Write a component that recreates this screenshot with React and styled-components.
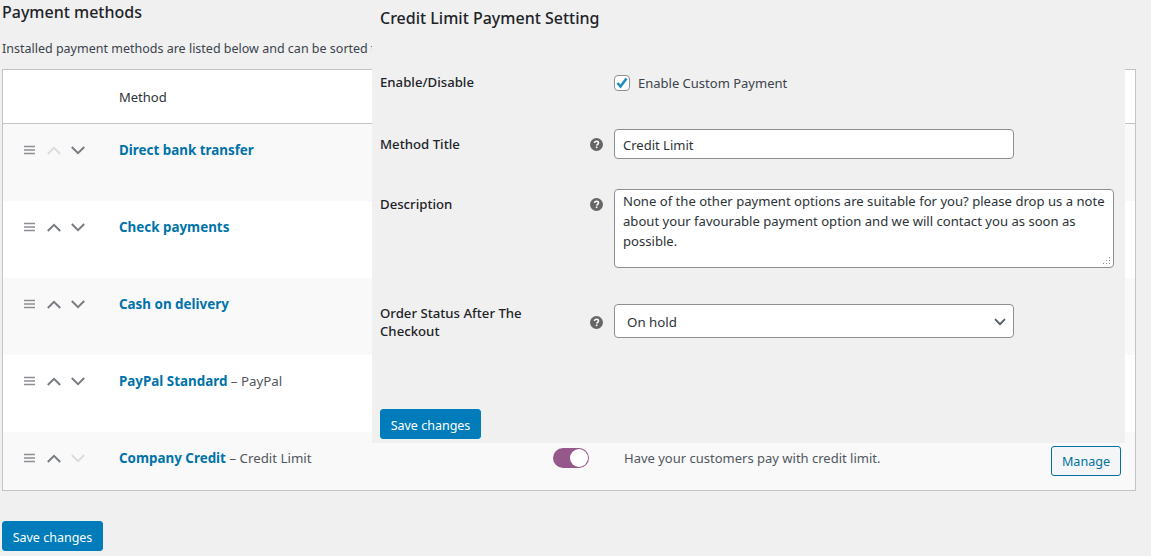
import React from "react";
import styled, { createGlobalStyle } from "styled-components";

const GlobalStyle = createGlobalStyle`
  html, body {
    margin: 0;
    background: #f0f0f1;
    overflow: hidden;
  }
  body {
    font-family: "Noto Sans", sans-serif;
    font-size: 13px;
    color: #3c434a;
  }
  * {
    box-sizing: border-box;
  }
`;

const Page = styled.div`
  position: relative;
  width: 1151px;
  height: 556px;
  padding: 0 15px 0 2px;
  overflow: hidden;
`;

const PageTitle = styled.h2`
  margin: 0;
  padding-top: 2px;
  height: 38px;
  font-size: 16px;
  line-height: 20px;
  font-weight: 500;
  color: #1d2327;
`;

const Intro = styled.p`
  margin: 0;
  height: 31px;
  padding-top: 1px;
  font-size: 12.5px;
  line-height: 20px;
  white-space: nowrap;
`;

const Table = styled.div`
  width: 1134px;
  background: #fff;
  border: 1px solid #c3c4c7;
`;

const HeaderRow = styled.div`
  height: 54px;
  padding-left: 116px;
  display: flex;
  align-items: center;
  font-size: 13px;
  color: #2c3338;
  border-bottom: 1px solid #c3c4c7;
`;

const Row = styled.div`
  height: ${(p) => p.$height}px;
  padding: 15px 14px 0 21px;
  display: flex;
  align-items: flex-start;
  background: ${(p) => (p.$alt ? "#f9f9f9" : "#fff")};
`;

const Controls = styled.div`
  width: 95px;
  height: 22px;
  flex: none;
  display: flex;
  align-items: center;
  gap: 10px;
`;

const MethodCell = styled.div`
  width: 434px;
  flex: none;
  font-size: 13.3px;
  line-height: 22px;
  color: #50575e;
`;

const MethodName = styled.a`
  color: #0073aa;
  font-size: 13.4px;
  font-weight: 700;
  text-decoration: none;
`;

const Toggle = styled.span`
  position: relative;
  width: 36px;
  height: 20px;
  margin-top: 1px;
  flex: none;
  border-radius: 10px;
  background: #96588a;
  &::after {
    content: "";
    position: absolute;
    top: 1px;
    right: 1px;
    width: 18px;
    height: 18px;
    border-radius: 50%;
    background: #fff;
  }
`;

const RowDescription = styled.div`
  margin-left: 35px;
  flex: 1;
  line-height: 22px;
  color: #50575e;
`;

const ManageButton = styled.a`
  width: 70px;
  height: 30px;
  margin-top: -1px;
  flex: none;
  display: flex;
  align-items: center;
  justify-content: center;
  font-size: 12.6px;
  color: #0071a1;
  background: #f3f5f6;
  border: 1px solid #0071a1;
  border-radius: 3px;
`;

const SaveButton = styled.button`
  width: 101px;
  height: 30px;
  padding: 2px 0 0;
  display: block;
  font-family: inherit;
  font-size: 12.5px;
  color: #fff;
  background: #007cba;
  border: 1px solid #007cba;
  border-radius: 3px;
`;

const FooterSave = styled.div`
  margin-top: 30px;
`;

const SettingsPanel = styled.section`
  position: absolute;
  top: 0;
  left: 372px;
  width: 753px;
  height: 443px;
  padding-left: 8px;
  background: #f0f0f1;
`;

const PanelTitle = styled.h3`
  margin: 0;
  height: 73px;
  padding-top: 8px;
  font-size: 16px;
  line-height: 20px;
  font-weight: 500;
  color: #1d2327;
`;

const FormRow = styled.div`
  display: grid;
  grid-template-columns: 210px 24px 1fr;
  align-items: start;
  margin-bottom: ${(p) => p.$after}px;
`;

const FieldLabel = styled.label`
  max-width: 170px;
  padding-top: ${(p) => p.$top || 0}px;
  font-size: 13.2px;
  line-height: 18px;
  font-weight: 500;
  color: #1d2327;
`;

const HelpSlot = styled.div`
  padding-top: ${(p) => p.$top || 0}px;
  display: flex;
`;

const CheckLine = styled.label`
  height: 20px;
  display: flex;
  align-items: center;
  gap: 8px;
  color: #3c434a;
`;

const CheckBox = styled.span`
  position: relative;
  width: 16px;
  height: 16px;
  flex: none;
  background: #fff;
  border: 1px solid #8c8f94;
  border-radius: 4px;
`;

const CheckMark = styled.svg`
  position: absolute;
  top: 0;
  left: 0;
`;

const TextInput = styled.input`
  display: block;
  width: 400px;
  height: 30px;
  padding: 2px 8px 0;
  font-family: inherit;
  font-size: 13px;
  color: #2c3338;
  background: #fff;
  border: 1px solid #8c8f94;
  border-radius: 4px;
`;

const TextAreaWrap = styled.div`
  position: relative;
  width: 500px;
`;

const TextArea = styled.textarea`
  display: block;
  width: 100%;
  height: 79px;
  padding: 1px 8px;
  resize: none;
  font-family: inherit;
  font-size: 13.1px;
  line-height: 20px;
  color: #2c3338;
  background: #fff;
  border: 1px solid #8c8f94;
  border-radius: 4px;
`;

const ResizeGrip = styled.svg`
  position: absolute;
  right: 3px;
  bottom: 3px;
  pointer-events: none;
`;

const SelectWrap = styled.div`
  position: relative;
  width: 400px;
`;

const Select = styled.select`
  display: block;
  width: 100%;
  height: 34px;
  padding: 2px 24px 0 12px;
  appearance: none;
  font-family: inherit;
  font-size: 13.3px;
  color: #2c3338;
  background: #fff;
  border: 1px solid #8c8f94;
  border-radius: 4px;
`;

const SelectArrow = styled.svg`
  position: absolute;
  top: 14px;
  right: 8px;
  pointer-events: none;
`;

const HandleIcon = styled.svg`
  flex: none;
  margin-right: 2px;
`;

const ChevronIcon = styled.svg`
  flex: none;
`;

const DragHandle = () => (
  <HandleIcon width="11" height="10" viewBox="0 0 11 10">
    <path d="M0 1.500h11M0 5h11M0 8.500h11" stroke="#8c8f94" strokeWidth="1.600" fill="none" />
  </HandleIcon>
);

const Chevron = ({ up, dim }) => (
  <ChevronIcon width="14" height="9" viewBox="0 0 14 9">
    <path
      d={up ? "M0.800 8L7 1.800L13.200 8" : "M0.800 1L7 7.200L13.200 1"}
      stroke={dim ? "#dcdcde" : "#787c82"}
      strokeWidth="2"
      fill="none"
    />
  </ChevronIcon>
);

const HelpIcon = () => (
  <svg width="13" height="13" viewBox="0 0 13 13">
    <circle cx="6.500" cy="6.500" r="6.500" fill="#666" />
    <path
      d="M4.500 5.100C4.500 4 5.400 3.300 6.500 3.300C7.700 3.300 8.500 4 8.500 5C8.500 6.200 7 6.300 6.600 7.500"
      stroke="#fff"
      strokeWidth="1.500"
      fill="none"
    />
    <rect x="5.800" y="8.500" width="1.600" height="1.600" fill="#fff" />
  </svg>
);

const gripDots = [
  [7, 1],
  [4, 4],
  [7, 4],
  [1, 7],
  [4, 7],
  [7, 7],
];

const methods = [
  { name: "Direct bank transfer", firstUp: true },
  { name: "Check payments" },
  { name: "Cash on delivery" },
  { name: "PayPal Standard", sub: "PayPal" },
  {
    name: "Company Credit",
    sub: "Credit Limit",
    lastDown: true,
    description: "Have your customers pay with credit limit.",
  },
];

export default function App() {
  return (
    <Page>
      <GlobalStyle />
      <PageTitle>Payment methods</PageTitle>
      <Intro>
        Installed payment methods are listed below and can be sorted to control their display order
        on the frontend.
      </Intro>

      <Table>
        <HeaderRow>Method</HeaderRow>
        {methods.map((method, index) => (
          <Row key={method.name} $alt={index % 2 === 0} $height={method.description ? 58 : 77}>
            <Controls>
              <DragHandle />
              <Chevron up dim={method.firstUp} />
              <Chevron dim={method.lastDown} />
            </Controls>
            <MethodCell>
              <MethodName>{method.name}</MethodName>
              {method.sub ? ` – ${method.sub}` : null}
            </MethodCell>
            {method.description ? (
              <>
                <Toggle />
                <RowDescription>{method.description}</RowDescription>
                <ManageButton>Manage</ManageButton>
              </>
            ) : null}
          </Row>
        ))}
      </Table>

      <FooterSave>
        <SaveButton>Save changes</SaveButton>
      </FooterSave>

      <SettingsPanel>
        <PanelTitle>Credit Limit Payment Setting</PanelTitle>

        <FormRow $after={36}>
          <FieldLabel>Enable/Disable</FieldLabel>
          <HelpSlot />
          <CheckLine>
            <CheckBox>
              <CheckMark width="14" height="14" viewBox="0 0 14 14">
                <path d="M2.500 7L5.500 10.500L11.500 2.500" stroke="#1e8cbe" strokeWidth="2.600" fill="none" />
              </CheckMark>
            </CheckBox>
            Enable Custom Payment
          </CheckLine>
        </FormRow>

        <FormRow $after={30}>
          <FieldLabel $top={6}>Method Title</FieldLabel>
          <HelpSlot $top={9}>
            <HelpIcon />
          </HelpSlot>
          <TextInput defaultValue="Credit Limit" />
        </FormRow>

        <FormRow $after={36}>
          <FieldLabel $top={6}>Description</FieldLabel>
          <HelpSlot $top={9}>
            <HelpIcon />
          </HelpSlot>
          <TextAreaWrap>
            <TextArea defaultValue="None of the other payment options are suitable for you? please drop us a note about your favourable payment option and we will contact you as soon as possible." />
            <ResizeGrip width="9" height="9" viewBox="0 0 9 9">
              {gripDots.map(([x, y]) => (
                <rect key={`${x}-${y}`} x={x} y={y} width="1" height="1" fill="#8c8f94" />
              ))}
            </ResizeGrip>
          </TextAreaWrap>
        </FormRow>

        <FormRow $after={69}>
          <FieldLabel>Order Status After The Checkout</FieldLabel>
          <HelpSlot $top={12}>
            <HelpIcon />
          </HelpSlot>
          <SelectWrap>
            <Select defaultValue="on-hold">
              <option value="on-hold">On hold</option>
              <option value="processing">Processing</option>
              <option value="completed">Completed</option>
            </Select>
            <SelectArrow width="12" height="8" viewBox="0 0 12 8">
              <path d="M1 1.200L6 6.200L11 1.200" stroke="#50575e" strokeWidth="1.700" fill="none" />
            </SelectArrow>
          </SelectWrap>
        </FormRow>

        <SaveButton>Save changes</SaveButton>
      </SettingsPanel>
    </Page>
  );
}
